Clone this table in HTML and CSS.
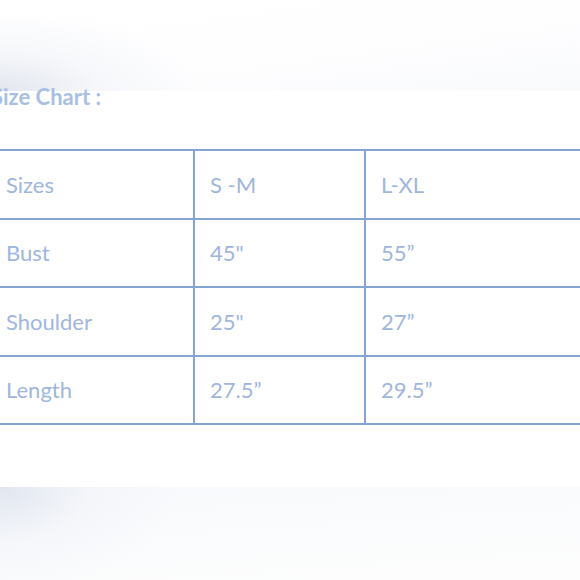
FILE: index.html
```html
<!DOCTYPE html>
<html>
<head>
<meta charset="utf-8">
<link rel="stylesheet" href="styles.css">
</head>
<body>
<div class="page">
  <div class="band band-top"></div>
  <h2 class="title">Size Chart :</h2>
  <table class="chart">
    <tr><td class="c1">Sizes</td><td class="c2">S -M</td><td class="c3">L-XL</td></tr>
    <tr><td class="c1">Bust</td><td class="c2">45"</td><td class="c3">55”</td></tr>
    <tr><td class="c1">Shoulder</td><td class="c2">25"</td><td class="c3">27”</td></tr>
    <tr><td class="c1">Length</td><td class="c2">27.5”</td><td class="c3">29.5”</td></tr>
  </table>
  <div class="spacer"></div>
  <div class="band band-bottom"></div>
</div>
</body>
</html>
```
FILE: styles.css
```css
html, body {
  margin: 0;
  padding: 0;
  background: #ffffff;
}
.page {
  width: 580px;
  height: 580px;
  overflow: hidden;
  display: flex;
  flex-direction: column;
  font-family: Lato, "Open Sans", sans-serif;
}
.band {
  flex: none;
}
.band-top {
  height: 91px;
  background:
    radial-gradient(ellipse 200px 80px at 0% 100%, rgba(225,229,238,0.95), rgba(238,241,246,0.5) 50%, rgba(255,255,255,0) 100%),
    linear-gradient(172deg, #ffffff 0%, #fefeff 55%, #f9fafc 100%);
}
.title {
  margin: 0 0 0 -9px;
  height: 58px;
  font-size: 22px;
  font-weight: 700;
  color: #a9bfe2;
  line-height: 11px;
}
.chart {
  flex: none;
  margin-left: -11px;
  width: 600px;
  border-collapse: collapse;
  table-layout: fixed;
}
.chart td {
  border: 2px solid #86a4d2;
  height: 66.5px;
  padding: 0 0 0 15px;
  font-size: 22px;
  color: #9fb6dc;
  vertical-align: middle;
}
.c1 { width: 187px; }
.c2 { width: 154px; }
.spacer {
  flex: none;
  height: 62px;
}
.band-bottom {
  flex: 1;
  background:
    radial-gradient(ellipse 180px 110px at 0% 0%, rgba(224,229,239,0.95), rgba(239,242,248,0.5) 50%, rgba(255,255,255,0) 100%),
    linear-gradient(176deg, #f8f9fc 0%, #fbfcfd 55%, #fdfdfd 100%);
}
```
